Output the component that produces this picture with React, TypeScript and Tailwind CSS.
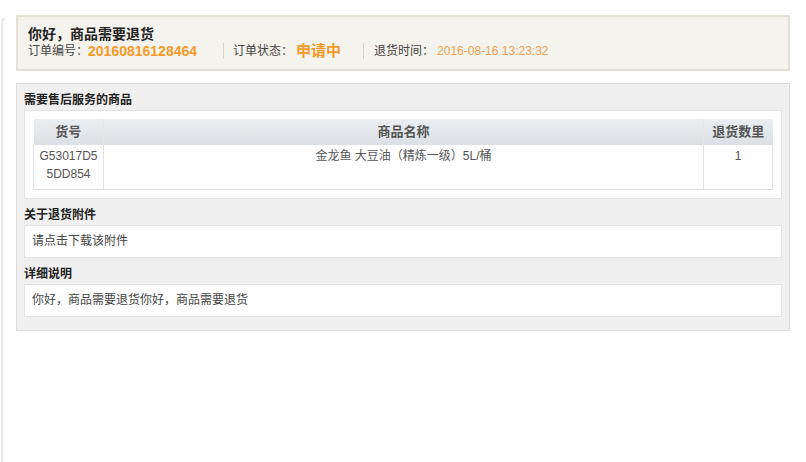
import React from 'react';

const FONT = { fontFamily: '"Liberation Sans", Arial, "Noto Sans CJK SC", sans-serif' };

const ORDER = {
  no: '20160816128464',
  status: '申请中',
  time: '2016-08-16 13:23:32',
};

const ITEMS = [
  { sku: 'G53017D55DD854', name: '金龙鱼 大豆油（精炼一级）5L/桶', qty: 1 },
];

function Section({ title, children }: { title: string; children: React.ReactNode }) {
  return (
    <div>
      <h3 className="text-[12px] font-bold leading-[15px] text-[#222] mb-[2px]">{title}</h3>
      {children}
    </div>
  );
}

export default function App() {
  return (
    <div className="w-[806px] h-[462px] bg-white relative overflow-hidden" style={FONT}>
      {/* left edge strip */}
      <div className="absolute left-[1px] top-[18px] bottom-0 w-[4px] border-l-2 border-t-2 border-[#e8e8e8] rounded-tl-[4px]" />

      <div className="pl-[16px] pr-[16px] pt-[15px]">
        {/* order summary */}
        <div className="bg-[#f5f3ed] border-2 border-[#e4e0d4] px-[10px] pt-[9px] pb-[10px]">
          <h2 className="text-[14px] font-bold leading-[17px] text-[#222]">你好，商品需要退货</h2>
          <div className="flex items-center text-[12px] text-[#444] leading-[16px]">
            <span>订单编号：</span>
            <span className="text-[14px] font-bold text-[#f39a28]">{ORDER.no}</span>
            <span className="ml-[26px] mr-[9px] w-px h-[16px] bg-[#d6d3c9]" />
            <span>订单状态：</span>
            <span className="ml-[3px] text-[15px] font-bold text-[#f39a28]">{ORDER.status}</span>
            <span className="ml-[22px] mr-[10px] w-px h-[16px] bg-[#d6d3c9]" />
            <span>退货时间：</span>
            <span className="ml-[3px] text-[#f0a050]">{ORDER.time}</span>
          </div>
        </div>

        {/* details */}
        <div className="mt-[12px] bg-[#f0f0f0] border border-[#dcdcdc] px-[7px] pt-[9px] pb-[13px] flex flex-col gap-[9px]">
          <Section title="需要售后服务的商品">
            <div className="bg-white border border-[#e2e2e2] p-[8px]">
              <table className="w-full border-collapse text-[12px] text-[#555]">
                <thead>
                  <tr className="bg-gradient-to-b from-[#ebeef1] to-[#dce0e4] h-[26px] text-[13px] font-bold text-[#555]">
                    <th className="w-[70px] border-r border-[#e6e6e6] font-bold">货号</th>
                    <th className="border-r border-[#e6e6e6] font-bold">商品名称</th>
                    <th className="w-[69px] font-bold">退货数里</th>
                  </tr>
                </thead>
                <tbody>
                  {ITEMS.map(item => (
                    <tr key={item.sku} className="border-b border-[#dddddd] align-top h-[44px]">
                      <td className="border-r border-l border-[#e2e2e2] text-center leading-[18px] pt-[2px] break-all px-[3px]">
                        {item.sku}
                      </td>
                      <td className="border-r border-[#e2e2e2] text-center leading-[18px] pt-[2px]">{item.name}</td>
                      <td className="border-r border-[#e2e2e2] text-center leading-[18px] pt-[2px]">{item.qty}</td>
                    </tr>
                  ))}
                </tbody>
              </table>
            </div>
          </Section>

          <Section title="关于退货附件">
            <div className="bg-white border border-[#e2e2e2] h-[33px] px-[7px] flex items-center text-[12px] text-[#444]">
              请点击下载该附件
            </div>
          </Section>

          <Section title="详细说明">
            <div className="bg-white border border-[#e2e2e2] h-[33px] px-[7px] flex items-center text-[12px] text-[#444]">
              你好，商品需要退货你好，商品需要退货
            </div>
          </Section>
        </div>
      </div>
    </div>
  );
}
